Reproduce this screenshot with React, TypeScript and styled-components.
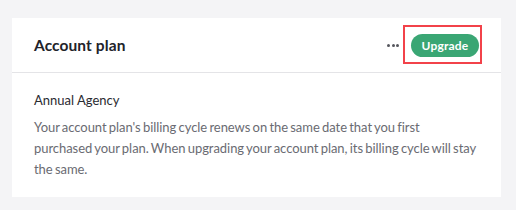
import React from "react";
import styled, { createGlobalStyle } from "styled-components";

const Global = createGlobalStyle`
  html, body { margin: 0; padding: 0; background: #f4f4f6; }
  body { font-family: Lato, "Noto Sans", sans-serif; -webkit-font-smoothing: antialiased; }
`;

const Page = styled.div`
  padding: 18px 15px 14px 12px;
`;

const Card = styled.section`
  background: #ffffff;
`;

const Header = styled.header`
  display: flex;
  align-items: center;
  justify-content: space-between;
  height: 54px;
  padding: 0 22px;
  border-bottom: 1px solid #e4e4e7;
`;

const Title = styled.h2`
  margin: 0;
  font-size: 15.5px;
  font-weight: 700;
  color: #22232a;
  letter-spacing: 0.1px;
`;

const Actions = styled.div`
  display: flex;
  align-items: center;
  gap: 12px;
`;

const MoreButton = styled.button`
  display: flex;
  align-items: center;
  gap: 1.5px;
  padding: 0;
  border: 0;
  background: none;
  cursor: pointer;
`;

const Dot = styled.span`
  width: 3px;
  height: 3px;
  border-radius: 50%;
  background: #55565d;
`;

const Anchor = styled.span`
  position: relative;
  display: inline-flex;
`;

const Highlight = styled.span`
  position: absolute;
  top: -9px;
  left: -8px;
  right: -3px;
  bottom: -7px;
  border: 2px solid #f2424a;
  pointer-events: none;
`;

const UpgradeButton = styled.button`
  height: 23px;
  width: 68px;
  border: 0;
  border-radius: 12px;
  background: #3aa674;
  color: #ffffff;
  font-family: Lato, "Noto Sans", sans-serif;
  font-size: 12px;
  font-weight: 700;
  letter-spacing: 0.2px;
  padding: 0;
  cursor: pointer;
`;

const Body = styled.div`
  padding: 18px 22px 17px;
`;

const PlanName = styled.h3`
  margin: 0 0 8px;
  font-size: 13px;
  font-weight: 400;
  color: #2a2b31;
  line-height: 18px;
`;

const Text = styled.p`
  margin: 0;
  font-size: 13px;
  line-height: 21px;
  letter-spacing: -0.05px;
  word-spacing: -1px;
  color: #6a6b72;
`;

export default function App() {
  return (
    <>
      <Global />
      <Page>
        <Card>
          <Header>
            <Title>Account plan</Title>
            <Actions>
              <MoreButton aria-label="More">
                <Dot />
                <Dot />
                <Dot />
              </MoreButton>
              <Anchor>
                <UpgradeButton>Upgrade</UpgradeButton>
                <Highlight />
              </Anchor>
            </Actions>
          </Header>
          <Body>
            <PlanName>Annual Agency</PlanName>
            <Text>
              Your account plan's billing cycle renews on the same date that you first
              purchased your plan. When upgrading your account plan, its billing cycle will stay
              the same.
            </Text>
          </Body>
        </Card>
      </Page>
    </>
  );
}
